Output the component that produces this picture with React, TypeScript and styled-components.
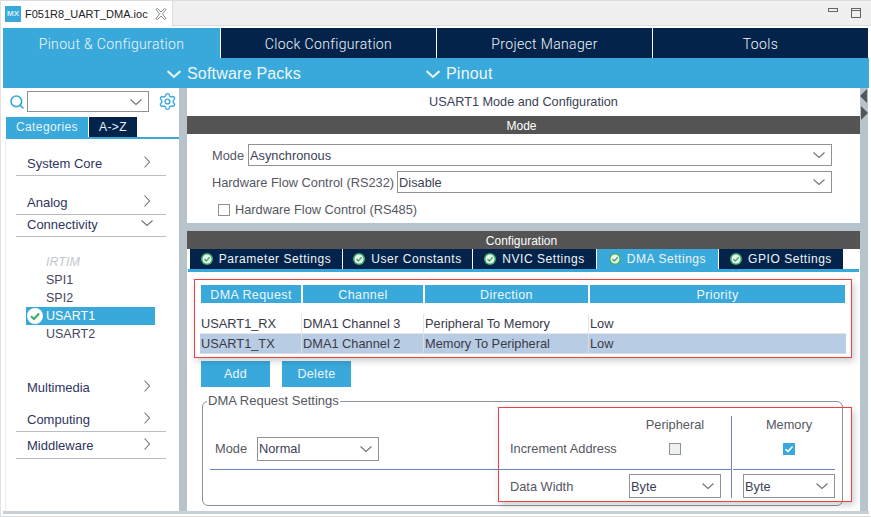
import React from "react";
import styled, { createGlobalStyle } from "styled-components";
import { Search, Settings } from "lucide-react";

const GlobalStyle = createGlobalStyle`
  html, body { margin: 0; padding: 0; background: #fff; }
  * { box-sizing: border-box; }
  body { font-family: "Liberation Sans", Arial, sans-serif; font-size: 12px; color: #3d3f58; }
`;

const BLUE = "#39a9db";
const NAVY = "#03234b";
const SPLIT = "#b8c4cc";
const DARK = "#535453";

const Page = styled.div`
  width: 871px;
  height: 517px;
  overflow: hidden;
  display: flex;
  flex-direction: column;
  background: #fff;
  border-top: 1px solid #dcdcdc;
  border-left: 1px solid #e2e2e2;
  border-bottom: 1px solid #dcdcdc;
`;

/* editor tab strip */
const TabStrip = styled.div`
  height: 25px;
  flex: none;
  display: flex;
  align-items: stretch;
  background: #f0f0f0;
  border-bottom: 1px solid #dcdcdc;
`;

const FileTab = styled.div`
  width: 172px;
  margin-bottom: -1px;
  display: flex;
  align-items: center;
  gap: 4px;
  padding-left: 4px;
  background: #fff;
  border-right: 1px solid #dcdcdc;
  color: #222;
  font-size: 11px;
`;

const MxLogo = styled.span`
  width: 16px;
  height: 16px;
  background: ${BLUE};
  color: #d6eefa;
  font-size: 8px;
  font-weight: bold;
  display: flex;
  align-items: center;
  justify-content: center;
  flex: none;
`;

const WindowButtons = styled.div`
  margin-left: auto;
  display: flex;
  align-items: center;
  gap: 13px;
  padding-right: 10px;
  svg { display: block; }
`;

const Shell = styled.div`
  flex: 1;
  min-height: 0;
  display: flex;
  flex-direction: column;
  padding: 2px 2px 0 2px;
`;

const NavTabs = styled.div`
  display: grid;
  grid-template-columns: 217px 216px 216px 216px;
  height: 30px;
  flex: none;
`;

const NavTab = styled.div<{ $active?: boolean }>`
  background: ${(p) => (p.$active ? BLUE : NAVY)};
  border-left: ${(p) => (p.$active ? "0" : "1px solid #fff")};
  color: #f2f6fa;
  font-family: Roboto, "Liberation Sans", sans-serif;
  font-weight: 300;
  font-size: 14px;
  letter-spacing: 0.35px;
  padding-top: 2px;
  display: flex;
  align-items: center;
  justify-content: center;
`;

const SubBar = styled.div`
  height: 30px;
  flex: none;
  background: ${BLUE};
  display: flex;
  align-items: center;
  color: #eef7fc;
  font-size: 16px;
  letter-spacing: 0.2px;
  padding: 2px 0 0 164px;
`;

const SubItem = styled.div<{ $width: number }>`
  width: ${(p) => p.$width}px;
  display: flex;
  align-items: center;
  gap: 6px;
`;

const Body = styled.div`
  height: 423px;
  flex: none;
  display: flex;
`;

const Footer = styled.div`
  height: 3px;
  flex: none;
  background: ${SPLIT};
  opacity: 0.8;
`;

/* left column */
const Side = styled.div`
  width: 176px;
  display: flex;
  flex-direction: column;
  background: #fff;
`;

const SearchRow = styled.div`
  height: 29px;
  flex: none;
  display: flex;
  align-items: flex-start;
  padding: 3px 0 0 6px;
  color: ${BLUE};
`;

const Combo = styled.div<{ $width: number; $height?: number }>`
  width: ${(p) => p.$width}px;
  height: ${(p) => p.$height ?? 22}px;
  flex: none;
  display: flex;
  align-items: center;
  justify-content: space-between;
  padding: 0 6px 0 1px;
  background: #fff;
  border: 1px solid #8d9397;
  font-size: 12.8px;
  color: #3d3f58;
`;

const SideTabs = styled.div`
  display: flex;
  gap: 1px;
  height: 20px;
  flex: none;
  padding-left: 3px;
`;

const SideTab = styled.div<{ $active?: boolean; $width: number }>`
  width: ${(p) => p.$width}px;
  background: ${(p) => (p.$active ? BLUE : NAVY)};
  color: #e8f4fb;
  font-size: 12px;
  letter-spacing: 0.4px;
  display: flex;
  align-items: center;
  justify-content: center;
`;

const SideLine = styled.div`
  height: 2px;
  flex: none;
  margin-left: 3px;
  background: ${BLUE};
`;

const SideCard = styled.div`
  flex: 1;
  margin: 0 3px 0 2px;
  padding: 12px 10px 0;
  background: #fff;
  border-left: 1px solid #ececec;
`;

const Category = styled.div<{ $height: number; $top?: number; $line?: boolean; $shift?: number }>`
  height: ${(p) => p.$height}px;
  margin-top: ${(p) => p.$top ?? 0}px;
  border-bottom: 1px solid ${(p) => (p.$line === false ? "transparent" : "#b8bfc4")};
  padding: 0 0 ${(p) => p.$shift ?? 0}px 11px;
  display: flex;
  align-items: center;
  justify-content: space-between;
  font-size: 13px;
  color: #2f3560;
  svg { flex: none; margin-right: 13px; margin-top: -3px; }
`;

const Peripherals = styled.div`
  margin: 16px 0 32px 10px;
  width: 129px;
  display: flex;
  flex-direction: column;
`;

const Peripheral = styled.div<{ $selected?: boolean; $disabled?: boolean }>`
  height: 18px;
  display: flex;
  align-items: center;
  gap: 3px;
  padding-left: ${(p) => (p.$selected ? "1px" : "20px")};
  background: ${(p) => (p.$selected ? BLUE : "transparent")};
  color: ${(p) => (p.$selected ? "#fff" : p.$disabled ? "#c3c8cd" : "#44465a")};
  font-style: ${(p) => (p.$disabled ? "italic" : "normal")};
  font-size: 12.5px;
`;

const Splitter = styled.div`
  width: 8px;
  flex: none;
  background: ${SPLIT};
`;

/* right column */
const Main = styled.div`
  width: 673px;
  flex: none;
  display: flex;
  flex-direction: column;
  background: ${SPLIT};
`;

const ModePanel = styled.div`
  height: 135px;
  background: #fff;
  display: flex;
  flex-direction: column;
  flex: none;
`;

const PanelTitle = styled.div`
  height: 28px;
  display: flex;
  align-items: center;
  justify-content: center;
  font-size: 12.7px;
  color: #3d3f58;
`;

const DarkBar = styled.div`
  height: 18px;
  flex: none;
  background: ${DARK};
  color: #fff;
  font-size: 12px;
  padding: 1px 4px 0 0;
  display: flex;
  align-items: center;
  justify-content: center;
`;

const FormRow = styled.div<{ $top: number; $gap?: number }>`
  margin-top: ${(p) => p.$top}px;
  padding-left: 25px;
  display: flex;
  align-items: center;
  gap: ${(p) => p.$gap ?? 3}px;
  color: #55575f;
  font-size: 12.8px;
`;

const CheckRow = styled(FormRow)`
  padding-left: 31px;
  gap: 5px;
`;

const Check = styled.span<{ $checked?: boolean; $soft?: boolean }>`
  width: 12px;
  height: 12px;
  flex: none;
  display: flex;
  align-items: center;
  justify-content: center;
  background: ${(p) => (p.$checked ? BLUE : p.$soft ? "#eef0f2" : "#fff")};
  border: 1px solid ${(p) => (p.$checked ? BLUE : "#8d9397")};
`;

const ConfigPanel = styled.div`
  margin-top: 8px;
  height: 280px;
  flex: none;
  background: #fff;
  display: flex;
  flex-direction: column;
`;

const ConfigTabs = styled.div`
  height: 20px;
  display: flex;
  padding-left: 3px;
  flex: none;
`;

const ConfigTab = styled.div<{ $active?: boolean; $width: number }>`
  width: ${(p) => p.$width}px;
  flex: none;
  background: ${(p) => (p.$active ? BLUE : NAVY)};
  border-right: 1px solid #fff;
  color: #f0f5f9;
  font-size: 12px;
  letter-spacing: 0.55px;
  display: flex;
  align-items: center;
  justify-content: center;
  gap: 6px;
`;

const ConfigLine = styled.div`
  height: 3px;
  flex: none;
  margin: 0 1px;
  background: ${BLUE};
`;

const ConfigBody = styled.div`
  flex: 1;
  position: relative;
  padding: 13px 0 0 14px;
`;

const RedBox = styled.div<{ $left: number; $top: number; $width: number; $height: number }>`
  position: absolute;
  left: ${(p) => p.$left}px;
  top: ${(p) => p.$top}px;
  width: ${(p) => p.$width}px;
  height: ${(p) => p.$height}px;
  border: 1px solid #f04040;
  box-shadow: 2px 3px 7px rgba(0, 0, 0, 0.2);
  pointer-events: none;
`;

const TableHead = styled.div`
  display: grid;
  grid-template-columns: 100px 120px 163px 255px;
  gap: 2px;
  height: 18px;
  margin-bottom: 11px;
`;

const HeadCell = styled.div`
  background: ${BLUE};
  color: #eef7fc;
  font-size: 12.5px;
  letter-spacing: 0.4px;
  padding-top: 1px;
  display: flex;
  align-items: center;
  justify-content: center;
`;

const TableRow = styled.div<{ $selected?: boolean }>`
  display: grid;
  grid-template-columns: 100px 120px 163px 256px;
  gap: 2px;
  width: 646px;
  height: 20px;
  margin-left: -1px;
  padding-left: 1px;
  padding-bottom: 1px;
  background: ${(p) => (p.$selected ? "#d9dde2" : "#e4e6e8")};
`;

const RowCell = styled.div<{ $selected?: boolean }>`
  background: ${(p) => (p.$selected ? "#b8cde3" : "#fff")};
  margin-left: -1px;
  padding-left: 1px;
  color: #3a3a48;
  font-size: 12.8px;
  display: flex;
  align-items: center;
`;

const Buttons = styled.div`
  display: flex;
  gap: 12px;
  margin-top: 7px;
`;

const ActionButton = styled.div`
  width: 69px;
  height: 26px;
  background: ${BLUE};
  color: #eef7fc;
  font-size: 12.5px;
  letter-spacing: 0.3px;
  display: flex;
  align-items: center;
  justify-content: center;
`;

const Group = styled.fieldset`
  margin: 7px 0 0 1px;
  padding: 0 7px;
  width: 641px;
  height: 112px;
  min-width: 0;
  border: 1px solid #8d9397;
  border-radius: 6px;
`;

const GroupTitle = styled.legend`
  padding: 0 1px;
  margin-left: -3px;
  font-size: 13px;
  line-height: 14px;
  color: #55575f;
`;

const SettingsGrid = styled.div`
  display: grid;
  grid-template-columns: 300px 119px 102px 2px 102px;
  grid-template-rows: 54px 28px;
  margin-top: 8px;
  color: #55575f;
  font-size: 12.8px;
`;

const TopCell = styled.div`
  border-bottom: 1px solid #6a85c0;
`;

const ModeCell = styled(TopCell)`
  display: flex;
  align-items: center;
  gap: 10px;
  padding: 12px 0 0 5px;
`;

const LabelCell = styled.div`
  display: flex;
  align-items: center;
  padding-top: 4px;
`;

const IncrementCell = styled(TopCell)`
  display: flex;
  align-items: center;
  padding-top: 12px;
`;

const ValueCell = styled(TopCell)<{ $pad: string }>`
  display: flex;
  flex-direction: column;
  align-items: center;
  gap: 11px;
  padding: ${(p) => p.$pad};
`;

const VerticalRule = styled.div`
  grid-column: 4;
  grid-row: 1 / span 2;
  border-left: 1px solid #6a85c0;
`;

const WidthCell = styled.div<{ $indent: number; $column?: number }>`
  display: flex;
  align-items: flex-end;
  padding-left: ${(p) => p.$indent}px;
  grid-column: ${(p) => p.$column ?? "auto"};
`;

const Chevron = ({
  dir = "down",
  color = "#6d7378",
  size = 12,
  weight = 1.1,
}: {
  dir?: "down" | "right";
  color?: string;
  size?: number;
  weight?: number;
}) => (
  <svg width={size} height={size} viewBox="0 0 12 12" fill="none">
    <path d={dir === "down" ? "M0.5 3.5 L6 8.5 L11.5 3.5" : "M3.5 0.5 L8.5 6 L3.5 11.5"} stroke={color} strokeWidth={weight} />
  </svg>
);

const OkIcon = ({ size = 12, bg = "#fff", fg = "#3fae6b" }: { size?: number; bg?: string; fg?: string }) => (
  <svg width={size} height={size} viewBox="0 0 16 16" style={{ flex: "none" }}>
    <circle cx="8" cy="8" r="8" fill={bg} />
    <path d="M4 8.2 L7 11 L12 5.4" fill="none" stroke={fg} strokeWidth="2.2" />
  </svg>
);

const TabOk = () => (
  <svg width="12" height="12" viewBox="0 0 16 16" style={{ flex: "none" }}>
    <circle cx="8" cy="8" r="8" fill="#3fae6b" />
    <circle cx="8" cy="8" r="6" fill="#e9f5ee" />
    <path d="M4.6 8.2 L7.2 10.6 L11.6 5.8" fill="none" stroke="#3fae6b" strokeWidth="2" />
  </svg>
);

const configTabs = [
  { label: "Parameter Settings", width: 153 },
  { label: "User Constants", width: 130 },
  { label: "NVIC Settings", width: 124 },
  { label: "DMA Settings", width: 122 },
  { label: "GPIO Settings", width: 125 },
];

const rows = [
  ["USART1_RX", "DMA1 Channel 3", "Peripheral To Memory", "Low"],
  ["USART1_TX", "DMA1 Channel 2", "Memory To Peripheral", "Low"],
];

export default function App() {
  return (
    <>
      <GlobalStyle />
      <Page>
        <TabStrip>
          <FileTab>
            <MxLogo>MX</MxLogo>
            F051R8_UART_DMA.ioc
            <svg width="12" height="12" viewBox="0 0 12 12" fill="none" style={{ marginLeft: 3 }}>
              <path d="M1 1.5 L2.5 0.5 L6 4 L9.5 0.5 L11 1.5 L7.5 6 L11 10.5 L9.5 11.5 L6 8 L2.5 11.5 L1 10.5 L4.5 6 Z" stroke="#8a8f94" strokeWidth="1" />
            </svg>
          </FileTab>
          <WindowButtons>
            <svg width="10" height="4" viewBox="0 0 10 4" fill="none" style={{ marginBottom: 6 }}>
              <rect x="0.5" y="0.5" width="9" height="3" stroke="#666" />
            </svg>
            <svg width="10" height="10" viewBox="0 0 10 10" fill="none">
              <rect x="0.5" y="0.5" width="9" height="9" stroke="#666" />
              <path d="M0 2.5 H10" stroke="#666" />
            </svg>
          </WindowButtons>
        </TabStrip>
        <Shell>
          <NavTabs>
            <NavTab $active>Pinout &amp; Configuration</NavTab>
            <NavTab>Clock Configuration</NavTab>
            <NavTab>Project Manager</NavTab>
            <NavTab>Tools</NavTab>
          </NavTabs>
          <SubBar>
            <SubItem $width={259}>
              <Chevron color="#eef7fc" size={14} weight={1.8} />
              Software Packs
            </SubItem>
            <SubItem $width={120}>
              <Chevron color="#eef7fc" size={14} weight={1.8} />
              Pinout
            </SubItem>
          </SubBar>
          <Body>
            <Side>
              <SearchRow>
                <Search size={16} strokeWidth={2.4} style={{ marginTop: 3, marginRight: 2 }} />
                <Combo $width={122} $height={21}>
                  <span />
                  <Chevron />
                </Combo>
                <Settings size={19} strokeWidth={1.8} style={{ marginLeft: 9, marginTop: 1 }} />
              </SearchRow>
              <SideTabs>
                <SideTab $active $width={82}>Categories</SideTab>
                <SideTab $width={48}>A-&gt;Z</SideTab>
              </SideTabs>
              <SideLine />
              <SideCard>
                <Category $height={25}>
                  System Core
                  <Chevron dir="right" />
                </Category>
                <Category $height={25} $top={14}>
                  Analog
                  <Chevron dir="right" />
                </Category>
                <Category $height={22} $shift={3}>
                  Connectivity
                  <Chevron dir="down" />
                </Category>
                <Peripherals>
                  <Peripheral $disabled>IRTIM</Peripheral>
                  <Peripheral>SPI1</Peripheral>
                  <Peripheral>SPI2</Peripheral>
                  <Peripheral $selected>
                    <OkIcon size={16} />
                    USART1
                  </Peripheral>
                  <Peripheral>USART2</Peripheral>
                </Peripherals>
                <Category $height={25} $line={false}>
                  Multimedia
                  <Chevron dir="right" />
                </Category>
                <Category $height={25} $top={7}>
                  Computing
                  <Chevron dir="right" />
                </Category>
                <Category $height={27}>
                  Middleware
                  <Chevron dir="right" />
                </Category>
              </SideCard>
            </Side>
            <Splitter />
            <Main>
              <ModePanel>
                <PanelTitle>USART1 Mode and Configuration</PanelTitle>
                <DarkBar>Mode</DarkBar>
                <FormRow $top={10} $gap={4}>
                  Mode
                  <Combo $width={584}>
                    Asynchronous
                    <Chevron />
                  </Combo>
                </FormRow>
                <FormRow $top={5}>
                  Hardware Flow Control (RS232)
                  <Combo $width={435}>
                    Disable
                    <Chevron />
                  </Combo>
                </FormRow>
                <CheckRow $top={9}>
                  <Check />
                  Hardware Flow Control (RS485)
                </CheckRow>
              </ModePanel>
              <ConfigPanel>
                <DarkBar>Configuration</DarkBar>
                <ConfigTabs>
                  {configTabs.map((tab, i) => (
                    <ConfigTab key={tab.label} $active={i === 3} $width={tab.width}>
                      <TabOk />
                      {tab.label}
                    </ConfigTab>
                  ))}
                </ConfigTabs>
                <ConfigLine />
                <ConfigBody>
                  <TableHead>
                    <HeadCell>DMA Request</HeadCell>
                    <HeadCell>Channel</HeadCell>
                    <HeadCell>Direction</HeadCell>
                    <HeadCell>Priority</HeadCell>
                  </TableHead>
                  {rows.map((row, i) => (
                    <TableRow key={row[0]} $selected={i === 1}>
                      {row.map((cell, j) => (
                        <RowCell key={j} $selected={i === 1}>
                          {cell}
                        </RowCell>
                      ))}
                    </TableRow>
                  ))}
                  <Buttons>
                    <ActionButton>Add</ActionButton>
                    <ActionButton>Delete</ActionButton>
                  </Buttons>
                  <Group>
                    <GroupTitle>DMA Request Settings</GroupTitle>
                    <SettingsGrid>
                      <ModeCell>
                        Mode
                        <Combo $width={122} $height={24}>
                          Normal
                          <Chevron />
                        </Combo>
                      </ModeCell>
                      <IncrementCell>Increment Address</IncrementCell>
                      <ValueCell $pad="1px 10px 0 0">
                        Peripheral
                        <Check $soft />
                      </ValueCell>
                      <VerticalRule />
                      <ValueCell $pad="1px 0 0 10px">
                        Memory
                        <Check $checked>
                          <svg width="10" height="10" viewBox="0 0 10 10" fill="none">
                            <path d="M1.5 5.2 L4 7.6 L8.5 2.4" stroke="#fff" strokeWidth="1.5" />
                          </svg>
                        </Check>
                      </ValueCell>
                      <div />
                      <LabelCell>Data Width</LabelCell>
                      <WidthCell $indent={0}>
                        <Combo $width={92} $height={24}>
                          Byte
                          <Chevron />
                        </Combo>
                      </WidthCell>
                      <WidthCell $indent={10} $column={5}>
                        <Combo $width={92} $height={24}>
                          Byte
                          <Chevron />
                        </Combo>
                      </WidthCell>
                    </SettingsGrid>
                  </Group>
                  <RedBox $left={7} $top={7} $width={658} $height={79} />
                  <RedBox $left={311} $top={135} $width={354} $height={95} />
                </ConfigBody>
              </ConfigPanel>
            </Main>
            <svg width="8" height="423" viewBox="0 0 8 423" style={{ background: SPLIT, flex: "none" }}>
              <path d="M7 1 L0 8 L7 15 Z" fill="#545658" />
              <path d="M1 18 L8 25 L1 32 Z" fill="#545658" />
            </svg>
          </Body>
          <Footer />
        </Shell>
      </Page>
    </>
  );
}
